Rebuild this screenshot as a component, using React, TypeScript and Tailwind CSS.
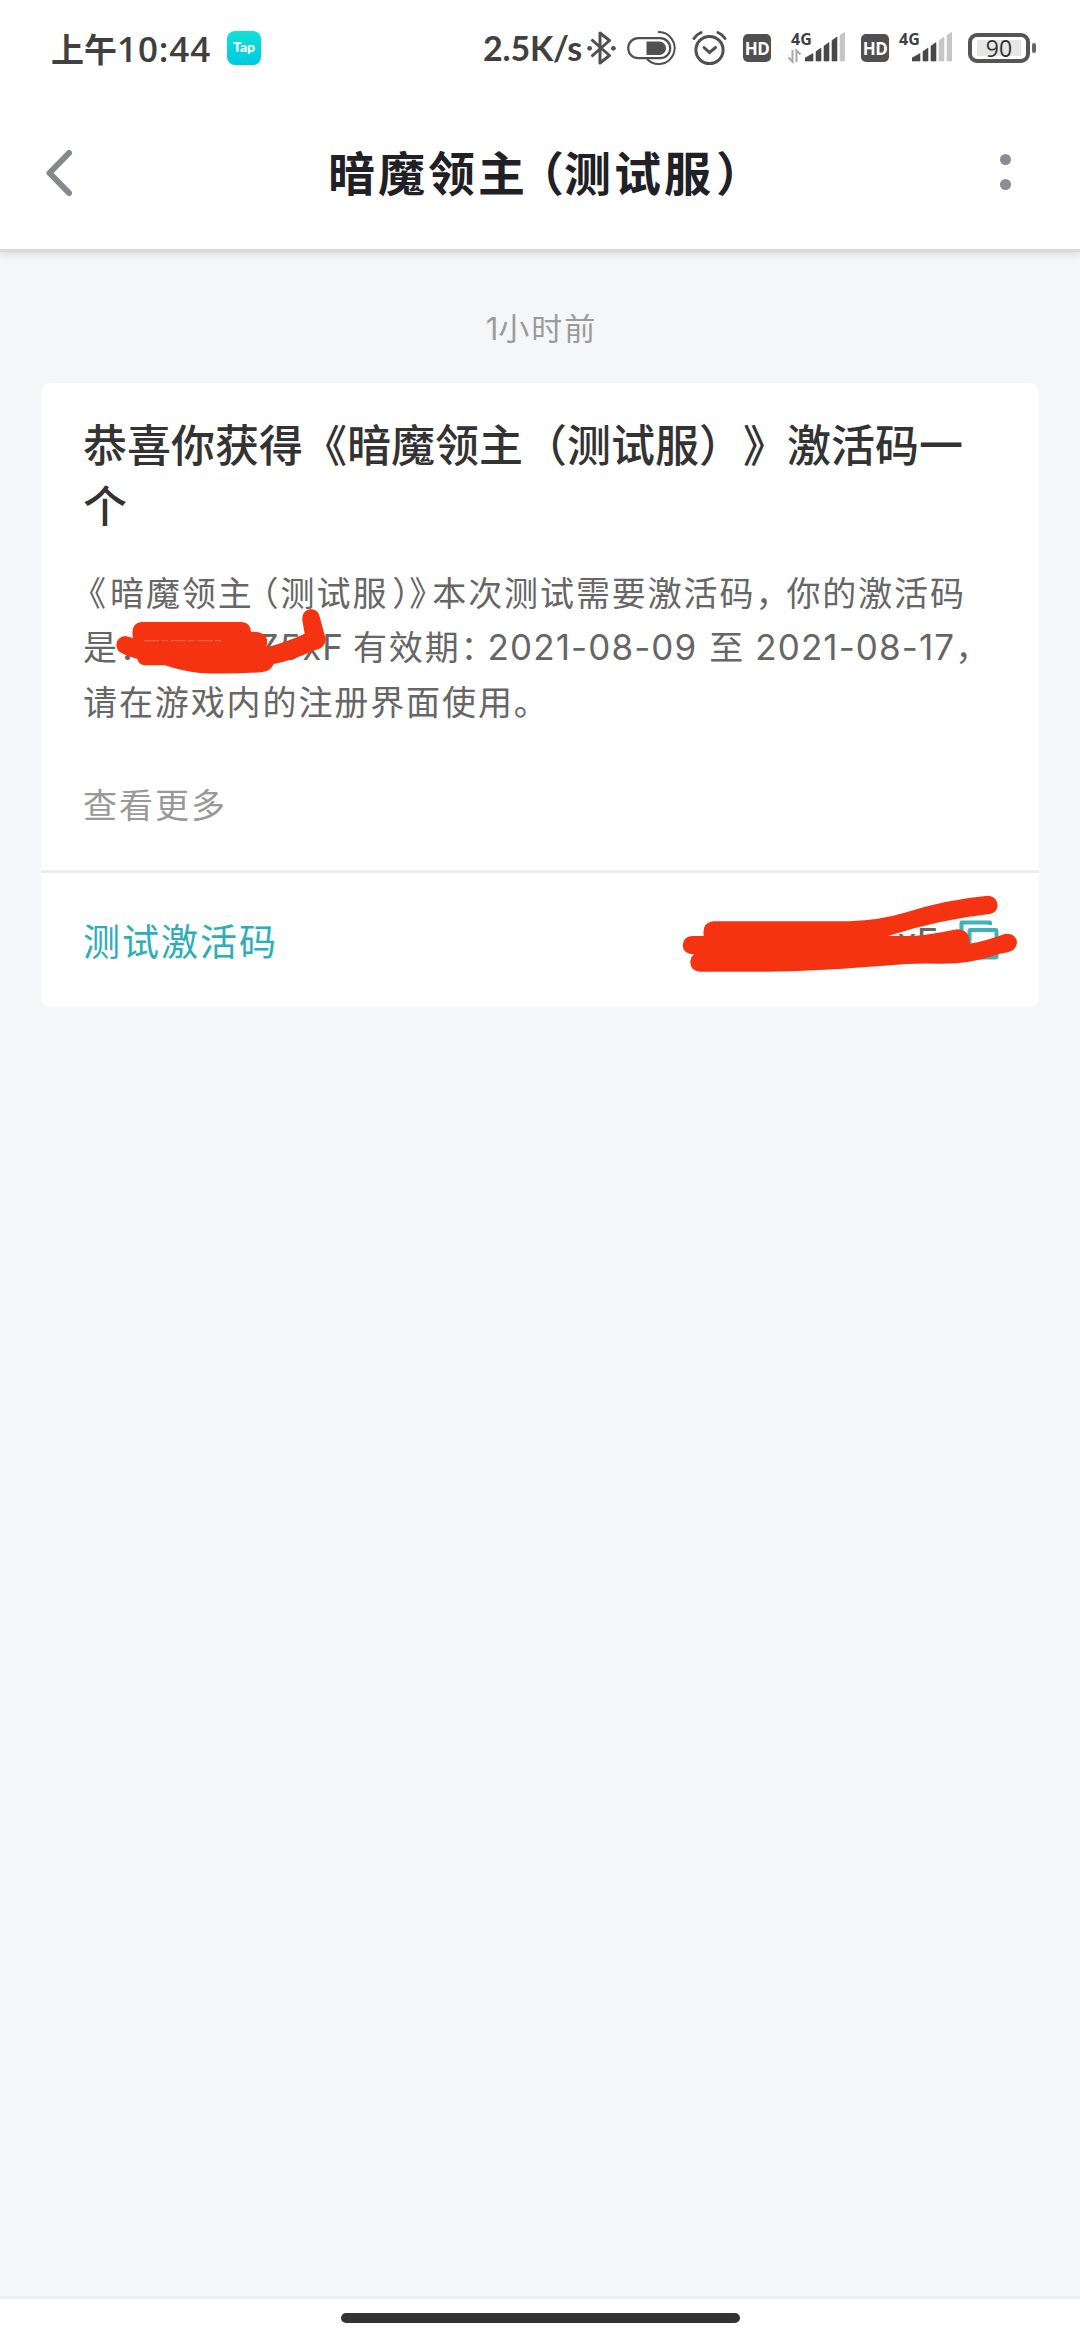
import type { ReactNode } from "react";

const SIGNAL_BARS = [
  "M0 31 V28 L8 23.5 V31 Z",
  "M11 31 V21.5 L16 18 V31 Z",
  "M19 31 V16 L24 12.5 V31 Z",
  "M27 31 V10.5 L32 7 V31 Z",
  "M35 31 V5.5 L40 2 V31 Z",
];

function BluetoothIcon() {
  return (
    <svg width="30" height="36" viewBox="0 0 30 36" fill="none" stroke="#505050" strokeWidth="3">
      <path d="M4.5 9.5 L22.5 25.5 L13 33 V3 L22.5 10.5 L4.5 26.5" strokeLinejoin="round" />
      <circle cx="2.6" cy="18.3" r="2.4" fill="#505050" stroke="none" />
      <circle cx="26.4" cy="18.3" r="2.4" fill="#505050" stroke="none" />
    </svg>
  );
}

function BatterySaverIcon() {
  return (
    <svg width="50" height="36" viewBox="0 0 50 36" fill="none" stroke="#505050">
      <rect x="1.2" y="8.2" width="42" height="20" rx="10" strokeWidth="2.2" />
      <path d="M19.5 11.5 H33 a6.8 6.8 0 0 1 0 13.5 H19.5 Z" fill="#505050" stroke="none" />
      <path d="M31 2 A16 16 0 1 1 20 29" strokeWidth="2" />
    </svg>
  );
}

function AlarmIcon() {
  return (
    <svg width="36" height="36" viewBox="0 0 36 36" fill="none" stroke="#505050" strokeWidth="3" strokeLinecap="round">
      <circle cx="17.5" cy="20" r="13.6" />
      <path d="M12 17.5 L17.5 22.5 L23.5 17.5" />
      <path d="M2 8.5 Q4.5 4.5 9 2.5" />
      <path d="M26 2.5 Q30.5 4.5 33 8.5" />
    </svg>
  );
}

function HdBadge() {
  return (
    <span className="mt-1 flex h-7 w-7 items-center justify-center rounded-[5px] bg-[#505050] font-['Open_Sans'] text-[17px] leading-none font-bold tracking-[-0.5px] text-white">
      HD
    </span>
  );
}

function Signal({ level, arrows }: { level: number; arrows?: boolean }) {
  return (
    <div className="relative flex h-9 items-start">
      <span
        className={`absolute top-0 font-['Open_Sans'] text-[16px] leading-[18px] font-bold text-[#404040] ${
          arrows ? "left-[3px]" : "left-0"
        }`}
      >
        4G
      </span>
      {arrows && (
        <svg width="13" height="36" viewBox="0 0 13 36" className="mr-[4px]" fill="none" stroke="#a8a8a8" strokeWidth="2">
          <path d="M4.5 20 V31.5 L0.5 27.5" />
          <path d="M8.5 32 V20.5 L12.5 24.5" />
        </svg>
      )}
      <svg width="40" height="36" viewBox="0 0 40 36" className={arrows ? "" : "ml-[13px]"}>
        {SIGNAL_BARS.map((d, i) => (
          <path key={d} d={d} fill={i < level ? "#484848" : "#c6c6c6"} stroke={i < level ? "#484848" : "#c6c6c6"} strokeWidth="0.6" strokeLinejoin="round" />
        ))}
      </svg>
    </div>
  );
}

function Battery() {
  return (
    <div className="mt-[3px] flex items-center">
      <div className="flex h-[30px] w-[62px] items-center justify-center rounded-[9px] border-4 border-[#555555]">
        <span className="flex h-4 w-11 items-center justify-center bg-[#e6e6e6] font-['Open_Sans'] text-[23px] leading-none font-medium text-[#333333]">
          90
        </span>
      </div>
      <span className="ml-0.5 h-[10px] w-1 rounded-sm bg-[#666666]" />
    </div>
  );
}

function StatusBar() {
  return (
    <div className="flex h-[98px] items-start bg-white pt-[30px] pr-[44px] pl-[51px] text-[#404040]">
      <span className="flex h-9 w-[162px] items-center font-['Noto_Sans_CJK_SC'] text-[33px] leading-none font-bold whitespace-nowrap">
        上午
        <span className="font-['Open_Sans'] text-[35px] font-semibold tracking-[0.9px]">10:44</span>
      </span>
      <span className="mt-px ml-[14px] flex h-[34px] w-[34px] items-center justify-center rounded-lg bg-linear-to-b from-[#12e0d6] to-[#00c9e2] pb-0.5 font-['Lato'] text-[14px] leading-none font-black text-white">
        Tap
      </span>
      <div className="ml-auto flex items-start">
        <span className="mr-1 h-9 w-[100px] font-['Lato'] text-[34px] leading-[36px] font-bold tracking-[-0.2px] whitespace-nowrap">
          2.5K/s
        </span>
        <BluetoothIcon />
        <div className="ml-[10px]"><BatterySaverIcon /></div>
        <div className="ml-[15px]"><AlarmIcon /></div>
        <div className="ml-[15px]"><HdBadge /></div>
        <div className="ml-[17px]"><Signal level={4} arrows /></div>
        <div className="ml-4"><HdBadge /></div>
        <div className="ml-[10px]"><Signal level={3} /></div>
        <div className="ml-4"><Battery /></div>
      </div>
    </div>
  );
}

// narrow punctuation: half-width alternates, set against one side of the box
function Open({ children, className }: { children: ReactNode; className: string }) {
  return (
    <span className={`inline-flex justify-end tracking-normal [font-feature-settings:'halt'] ${className}`}>
      {children}
    </span>
  );
}

function Close({ children, className }: { children: ReactNode; className: string }) {
  return (
    <span className={`inline-flex justify-start tracking-normal [font-feature-settings:'halt'] ${className}`}>
      {children}
    </span>
  );
}

function DateText({ children }: { children: string }) {
  return <span className="font-['Inter'] text-[35px] leading-none tracking-[1.1px]">{children}</span>;
}

function Header() {
  return (
    <header className="relative z-10 flex h-[151px] items-center bg-white shadow-[0_3px_1px_#dadada,0_7px_6px_#e4e4e4]">
      <svg width="60" height="60" viewBox="0 0 60 60" className="ml-[29px]" fill="none" stroke="#85888d" strokeWidth="6">
        <path d="M40 9 L20.5 29 L40 49" strokeLinecap="round" strokeLinejoin="round" />
      </svg>
      <h1 className="ml-[239px] pb-[5px] text-[47px] leading-[60px] font-bold tracking-[3px] whitespace-nowrap text-[#1f2126]">
        暗魔领主
        <Open className="w-[36px]">（</Open>
        测试服
        <Close className="w-[30px] pl-0.5">）</Close>
      </h1>
      <div className="mr-[69px] ml-auto flex flex-col gap-[14px] pb-[4px]">
        <span className="h-[11px] w-[11px] rounded-full bg-[#8b8d94]" />
        <span className="h-[11px] w-[11px] rounded-full bg-[#8b8d94]" />
      </div>
    </header>
  );
}

function BodyScribble() {
  return (
    <svg width="210" height="66" viewBox="258 716 630 198" className="absolute top-[226px] left-[75px]">
      <path
        fill="#f63310"
        d="M332 755 H634 Q662 757 663 785 Q690 782 706 797 Q715 808 709 831 Q770 815 824 790 L817 750 Q815 719 843 716 Q866 718 870 742 L887 805 Q888 833 850 841 Q790 869 731 881 Q724 902 694 906 Q590 912 510 908 Q455 902 405 885 H342 Q326 882 322 866 Q295 859 274 848 Q259 841 259 822 Q262 799 286 797 Q300 800 309 804 Q300 760 332 755 Z"
      />
      <path d="M343 811 H580" stroke="#fb8a70" strokeWidth="2" strokeDasharray="44 8 18 10" />
    </svg>
  );
}

function CodeScribble() {
  return (
    <svg width="336" height="78" viewBox="127 164 1008 234" className="absolute top-[22px] left-[641px]">
      <path
        fill="#f63310"
        d="M192 287 Q187 247 220 243 H630 Q720 240 800 216 Q915 178 1044 166 Q1072 168 1074 194 Q1072 218 1050 221 Q900 237 745 287 H820 Q870 284 952 267 Q992 268 990 310 Q1035 303 1097 280 Q1130 279 1132 306 Q1130 331 1104 336 Q1080 340 1060 347 Q990 371 900 370 Q850 368 800 371 Q520 394 380 394 H180 Q152 391 152 365 Q153 350 163 342 Q130 342 129 315 Q131 288 158 287 Z"
      />
    </svg>
  );
}

function MessageCard() {
  return (
    <article className="relative mx-[41px] rounded-[10px] bg-white">
      <div className="px-[42px] pt-[30px] pb-10">
        <h2 className="text-[44px] leading-[60.5px] font-medium text-[#333333] [text-spacing-trim:space-all]">
          恭喜你获得《暗魔领主（测试服）》激活码一
          <br />个
        </h2>
        <p className="mt-[31px] text-[34px] leading-[54.3px] tracking-[1.9px] whitespace-nowrap text-[#666666]">
          <Open className="w-[27px] pr-1">《</Open>
          暗魔领主
          <Open className="w-[27px] pr-0.5">（</Open>
          测试服
          <Close className="w-[21px] pl-1">）</Close>
          <Close className="w-[23px]">》</Close>
          本次测试需要激活码
          <Close className="w-[31px]">，</Close>
          你的激活码
          <br />是
          <Close className="w-[25px]">：</Close>
          <span className="inline-flex w-[200px] justify-end font-['Inter'] text-[35px] leading-none tracking-[1px]">Z5xF</span>
          <span className="inline-block w-[9px]" />
          有效期
          <Close className="w-[27px]">：</Close>
          <DateText>2021-08-09</DateText>
          <span className="inline-block w-[12px]" />至
          <span className="inline-block w-[10px]" />
          <DateText>2021-08-17</DateText>
          <Close className="w-5">，</Close>
          <br />
          请在游戏内的注册界面使用。
        </p>
        <p className="mt-[49px] text-[34px] leading-[54px] tracking-[2px] text-[#999999]">查看更多</p>
      </div>
      <div className="relative -mt-px flex h-[137px] items-center border-t-[3px] border-[#eeeeee] pr-10 pl-[42px]">
        <span className="pt-0.5 text-[37px] tracking-[2px] text-[#2caeb6]">测试激活码</span>
        <span className="ml-auto pt-0.5 font-['Inter'] text-[36px] text-[#666666]">xF</span>
        <svg width="40" height="40" viewBox="0 0 40 40" className="ml-[21px]" fill="none" stroke="#3cb4b8" strokeWidth="4">
          <path d="M31 5 V2.5 H2.5 V30 H8" strokeLinejoin="round" />
          <rect x="10.5" y="10" width="27" height="27.5" rx="1" fill="#ffffff" />
        </svg>
        <CodeScribble />
      </div>
      <BodyScribble />
    </article>
  );
}

export default function App() {
  return (
    <div className="flex h-[2340px] w-[1080px] flex-col overflow-hidden bg-[#f5f6f8] font-['Noto_Sans_CJK_SC',sans-serif]">
      <StatusBar />
      <Header />
      <main className="flex-1">
        <p className="pt-[53px] text-center text-[31px] leading-[50px] tracking-[2px] text-[#9b9b9b]">
          <span className="ml-[3px] font-['Inter'] leading-none tracking-normal">1</span>小时前
        </p>
        <div className="pt-[31px]">
          <MessageCard />
        </div>
      </main>
      <footer className="flex h-[44px] justify-center border-t-[3px] border-[#eeeeee] bg-white pt-[14px]">
        <div className="h-[10px] w-[399px] rounded-full bg-[#333333]" />
      </footer>
    </div>
  );
}
